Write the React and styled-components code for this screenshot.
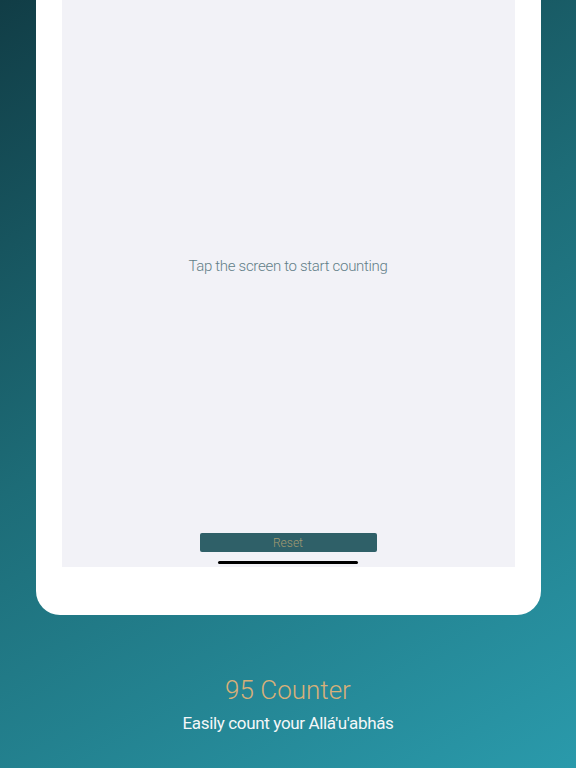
import React from "react";
import styled, { createGlobalStyle } from "styled-components";

const Global = createGlobalStyle`
  html, body {
    margin: 0;
    padding: 0;
  }
  body {
    font-family: Roboto, "Noto Sans", sans-serif;
  }
`;

const Page = styled.div`
  min-height: 768px;
  background: linear-gradient(150deg, #113d46 0%, #1d6c77 45%, #2a9aab 100%);
  display: flex;
  flex-direction: column;
  align-items: center;
  overflow: hidden;
`;

const Device = styled.div`
  width: 505px;
  box-sizing: border-box;
  padding: 0 26px 48px;
  background: #ffffff;
  border-radius: 0 0 24px 24px;
`;

const Screen = styled.div`
  height: 567px;
  background: #f2f2f7;
  display: flex;
  flex-direction: column;
  align-items: center;
`;

const Prompt = styled.p`
  margin: 256px 0 0;
  font-size: 15px;
  line-height: 20px;
  letter-spacing: -0.3px;
  font-weight: 300;
  color: #627e88;
`;

const ResetButton = styled.button`
  margin-top: auto;
  width: 177px;
  height: 19px;
  padding: 2px 0 0;
  border: none;
  border-radius: 2px;
  background: #2f6068;
  color: #a39b72;
  font-family: Roboto, sans-serif;
  font-size: 12px;
  font-weight: 300;
  line-height: 17px;
`;

const HomeBar = styled.div`
  width: 140px;
  height: 3px;
  border-radius: 2px;
  background: #000;
  margin: 9px 0 3px;
`;

const Caption = styled.div`
  margin-top: 59px;
  display: flex;
  flex-direction: column;
  align-items: center;
  gap: 5px;
`;

const Title = styled.h1`
  margin: 0;
  font-size: 26px;
  line-height: 32px;
  font-weight: 300;
  color: #d8b079;
`;

const Subtitle = styled.p`
  margin: 0;
  font-size: 17px;
  line-height: 24px;
  letter-spacing: -0.35px;
  font-weight: 400;
  color: #f4f7f8;
`;

export default function App() {
  return (
    <>
      <Global />
      <Page>
        <Device>
          <Screen>
            <Prompt>Tap the screen to start counting</Prompt>
            <ResetButton>Reset</ResetButton>
            <HomeBar />
          </Screen>
        </Device>
        <Caption>
          <Title>95 Counter</Title>
          <Subtitle>Easily count your Allá'u'abhás</Subtitle>
        </Caption>
      </Page>
    </>
  );
}
